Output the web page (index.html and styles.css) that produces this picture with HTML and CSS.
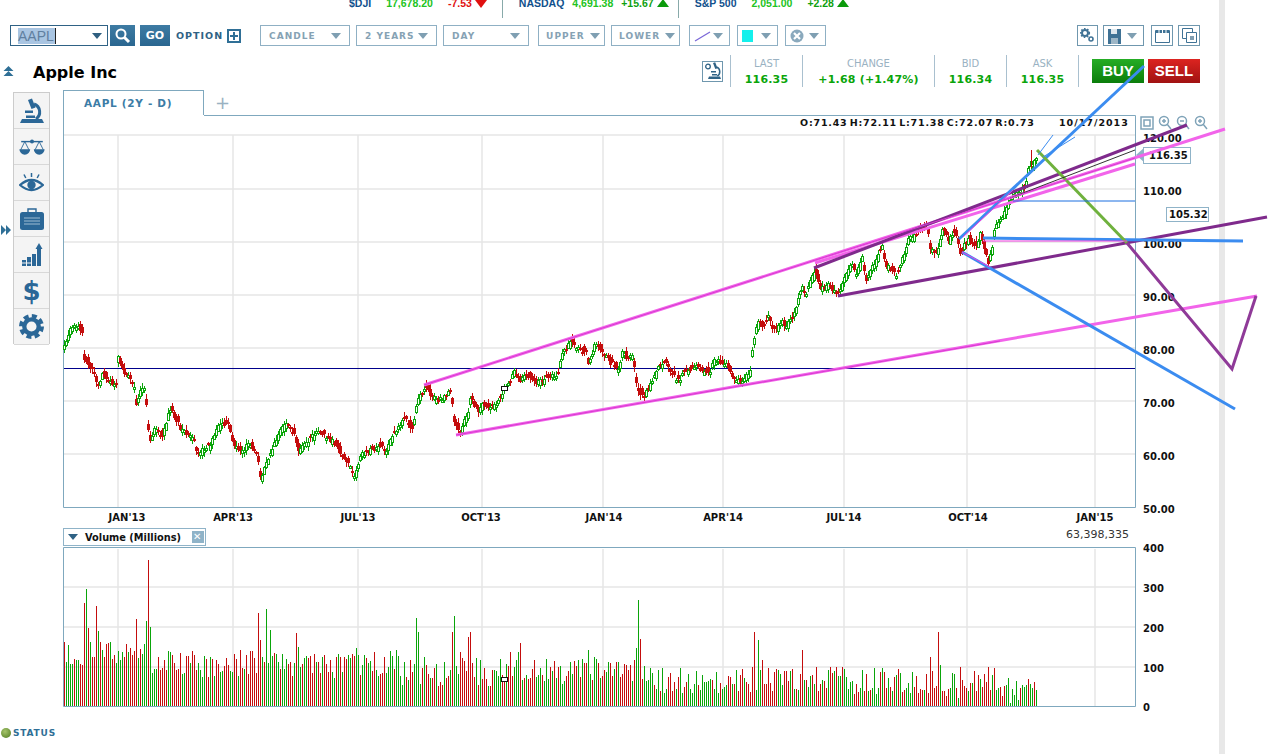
FILE: index.html
```html
<!DOCTYPE html>
<html lang="en">
<head>
  <meta charset="UTF-8" />
  <title>AAPL Chart</title>
  <link rel="stylesheet" href="styles.css">
</head>
<body>
<div class="page">

  <!-- TICKER -->
  <div class="ticker">
    <div class="tick">
      <span class="tick-name">$DJI</span>
      <span class="tick-val">17,678.20</span>
      <span class="tick-down">-7.53<i class="tri-down"></i></span>
    </div>
    <div class="tick mid">
      <span class="tick-name">NASDAQ</span>
      <span class="tick-val">4,691.38</span>
      <span class="tick-up">+15.67<i class="tri-up"></i></span>
    </div>
    <div class="tick last">
      <span class="tick-name">S&amp;P 500</span>
      <span class="tick-val">2,051.00</span>
      <span class="tick-up">+2.28<i class="tri-up"></i></span>
    </div>
  </div>

  <!-- TOOLBAR -->
  <div class="toolbar">
    <div class="symbol-input"><span class="symbol-text">AAPL</span><i class="caret dark"></i></div>
    <div class="blue-btn search-btn">
      <svg width="17" height="17" viewBox="0 0 17 17"><circle cx="7" cy="7" r="4.5" fill="none" stroke="#fff" stroke-width="2"/><path d="M10.5 10.5l4.5 4.5" stroke="#fff" stroke-width="3"/></svg>
    </div>
    <div class="blue-btn go-btn">GO</div>
    <div class="option">OPTION</div>
    <div class="plus-box"></div>

    <div class="tool-group first">
      <div class="select w-candle"><span>CANDLE</span><i class="caret"></i></div>
      <div class="select w-years"><span>2 YEARS</span><i class="caret"></i></div>
      <div class="select w-day"><span>DAY</span><i class="caret"></i></div>
    </div>
    <div class="tool-group">
      <div class="select w-upper"><span>UPPER</span><i class="caret"></i></div>
      <div class="select w-lower"><span>LOWER</span><i class="caret"></i></div>
    </div>
    <div class="tool-group narrow">
      <div class="select w-draw">
        <svg width="17" height="12" viewBox="0 0 17 12"><path d="M1 11L16 2" stroke="#7b68d8" stroke-width="1.3"/></svg>
        <i class="caret"></i>
      </div>
      <div class="select w-draw"><b class="swatch"></b><i class="caret"></i></div>
      <div class="select w-draw">
        <svg width="14" height="14" viewBox="0 0 14 14"><circle cx="7" cy="7" r="6.5" fill="#8aa9bd"/><path d="M4 4l6 6M10 4l-6 6" stroke="#fff" stroke-width="2.2"/></svg>
        <i class="caret"></i>
      </div>
    </div>

    <div class="tool-right">
      <div class="icon-btn w-gear">
        <svg width="15" height="15" viewBox="0 0 15 15"><circle cx="5" cy="5" r="3" fill="none" stroke="#3f7295" stroke-width="2"/><circle cx="5" cy="5" r="4.4" fill="none" stroke="#3f7295" stroke-width="1.4" stroke-dasharray="1.6 1.6"/><circle cx="11" cy="11" r="2" fill="none" stroke="#3f7295" stroke-width="1.6"/></svg>
      </div>
      <div class="icon-btn w-save">
        <svg width="13" height="16" viewBox="0 0 13 16"><path d="M0 1h13v15H0z" fill="#3f7295"/><path d="M3 1h6v5H3z" fill="#dfe8ee"/><path d="M3 10h7v6H3z" fill="#9db6c6"/></svg>
        <i class="caret"></i>
      </div>
      <div class="icon-btn w-cal">
        <svg width="15" height="15" viewBox="0 0 15 15"><path d="M.5 2.500h14v12H.5z" fill="#fff" stroke="#3f7295"/><path d="M1 2h13v3H1z" fill="#3f7295"/><path d="M4 2v3M7.500 2v3M11 2v3" stroke="#fff"/></svg>
      </div>
      <div class="icon-btn w-win">
        <svg width="15" height="15" viewBox="0 0 15 15"><path d="M.5.5h10v10H.5z" fill="#fff" stroke="#3f7295"/><path d="M4.500 4.500h10v10h-10z" fill="#fff" stroke="#3f7295"/><path d="M8 8h4v4H8z" fill="#7f9db1"/></svg>
      </div>
    </div>
  </div>

  <!-- TITLE AND QUOTE -->
  <div class="quote-row">
    <svg class="title-arrow" width="11" height="11" viewBox="0 0 11 11"><path d="M5.500 0l5 5H.5zM5.500 5l5 5H.5z" fill="#2f6f96"/></svg>
    <h1 class="title">Apple Inc</h1>
    <div class="study-btn">
      <svg width="17" height="18" viewBox="0 0 17 18"><circle cx="4" cy="4.500" r="2.300" fill="none" stroke="#2f6285" stroke-width="1.300"/><path d="M9 1l2.200-.8 2.300 6-2.200.8z" fill="#2f6285"/><path d="M12.500 5a5 5 0 0 1 .8 9" fill="none" stroke="#2f6285" stroke-width="1.500"/><path d="M7 9h5v1.500H7zM8 12h5v1.500H8zM5 14.500h11l1 2.500H4z" fill="#2f6285"/></svg>
    </div>
    <div class="quote-cell w-last"><label>LAST</label><strong>116.35</strong></div>
    <div class="quote-cell w-change"><label>CHANGE</label><strong>+1.68 (+1.47%)</strong></div>
    <div class="quote-cell w-bid"><label>BID</label><strong>116.34</strong></div>
    <div class="quote-cell w-ask"><label>ASK</label><strong>116.35</strong></div>
    <div class="trade-btns">
      <div class="trade buy">BUY</div>
      <div class="trade sell">SELL</div>
    </div>
  </div>

  <!-- SIDEBAR AND CHARTS -->
  <div class="main">
    <svg class="collapse" width="10" height="10" viewBox="0 0 10 10"><path d="M0 0l5 5-5 5zM5 0l5 5-5 5z" fill="#2f6f96"/></svg>

    <div class="side-tools">
      <div class="side-cell">
        <svg width="26" height="26" viewBox="0 0 26 26"><path d="M9 2l4-1.500 3.500 9-4 1.500z" fill="#2b6797"/><path d="M15 6a8.500 8.500 0 0 1 2 15" fill="none" stroke="#2b6797" stroke-width="3"/><path d="M6 12.500h8V15H6z" fill="#2b6797"/><path d="M3 21h20l2 4H1z" fill="#2b6797"/><path d="M7 17.500h9v2.500H7z" fill="#2b6797"/></svg>
      </div>
      <div class="side-cell">
        <svg width="26" height="18" viewBox="0 0 28 20"><path d="M2 4h24" stroke="#2b6797" stroke-width="1.600"/><circle cx="14" cy="4" r="2.200" fill="#2b6797"/><path d="M6 4L1.500 13M6 4l4.500 9M22 4l-4.500 9M22 4l4.500 9" stroke="#2b6797" fill="none"/><path d="M0 12.500h12a6 6 0 0 1-12 0zM16 12.500h12a6 6 0 0 1-12 0z" fill="#2b6797"/></svg>
      </div>
      <div class="side-cell">
        <svg width="25" height="21" viewBox="0 0 25 21"><path d="M1 13Q12.500 3 24 13 12.500 23 1 13z" fill="none" stroke="#2b6797" stroke-width="2.200"/><circle cx="12.500" cy="13" r="4.200" fill="#2b6797"/><path d="M12.500 1v4M5 2.500l1.800 3.500M20 2.500L18.200 6" stroke="#2b6797" stroke-width="1.500"/></svg>
      </div>
      <div class="side-cell">
        <svg width="26" height="24" viewBox="0 0 26 24"><path d="M9 5V2h8v3" fill="none" stroke="#2b6797" stroke-width="1.400"/><rect x="1" y="5" width="24" height="18" rx="2.500" fill="#2b6797"/><path d="M5 11h16M5 14h16M5 17h16" stroke="#9fbdd2"/></svg>
      </div>
      <div class="side-cell">
        <svg width="22" height="24" viewBox="0 0 22 24"><path d="M1 17h4v6H1zM6 14h4v9H6zM11 11h4v12h-4zM16 6h4v17h-4z" fill="#2b6797"/><path d="M18 0l3.500 6h-7z" fill="#2b6797"/><path d="M1 20h9" stroke="#f4f4f4"/></svg>
      </div>
      <div class="side-cell dollar">$</div>
      <div class="side-cell">
        <svg width="25" height="25" viewBox="0 0 26 26"><circle cx="13" cy="13" r="7.500" fill="none" stroke="#2b6797" stroke-width="4.500"/><circle cx="13" cy="13" r="11" fill="none" stroke="#2b6797" stroke-width="4" stroke-dasharray="5.200 3.440"/></svg>
      </div>
    </div>

    <div class="charts">
      <div class="tab-strip">
        <div class="tab">AAPL (2Y - D)</div>
        <div class="tab-add">+</div>
      </div>

      <svg id="price-chart" class="chart-svg" width="1156" height="413" viewBox="63 115 1156 413"></svg>

      <div class="vol-head">
        <div class="vol-title"><i class="vol-arrow"></i><span>Volume (Millions)</span><b class="vol-close"></b></div>
        <div class="vol-last">63,398,335</div>
      </div>

      <svg id="volume-chart" class="chart-svg" width="1156" height="175" viewBox="63 545 1156 175"></svg>

      <div class="status"><i class="status-dot"></i>STATUS</div>
    </div>
  </div>
</div>

<!-- DRAWN TREND LINES -->
<svg class="drawings" width="1275" height="754" viewBox="0 0 1275 754">
  <g class="thick">
    <path d="M424 385L1225 129" stroke="#f264ea"/>
    <path d="M815 263L1135 164" stroke="#f264ea"/>
    <path d="M456 435L1257 296" stroke="#f264ea"/>
    <path d="M814 268L1187 125" stroke="#7f2a8c"/>
    <path d="M838 296L1267 217" stroke="#7f2a8c"/>
    <path d="M959 239L1144 66" stroke="#3b8cf0"/>
    <path d="M983 238L1243 241" stroke="#3b8cf0"/>
    <path d="M962 252L1235 409" stroke="#3b8cf0"/>
    <path d="M1037 150L1127 243" stroke="#6fb13d"/>
    <path d="M1127 243L1232 369L1256 296" stroke="#8f3a98"/>
  </g>
  <g class="thin">
    <path d="M1010 198L1135 150" stroke="#333"/>
    <path d="M1013 201H1135" stroke="#1a6fe0"/>
    <path d="M1038 155L1053 135M1043 157L1075 137" stroke="#3b8cf0"/>
    <path d="M963 237L1013 190M983 241H1127M962 252L990 267" stroke="#f03ee0"/>
    <path d="M424 385L1135 158M456 435L1000 341" stroke="#d83ad0"/>
  </g>
</svg>

<script src="chart.js"></script>
</body>
</html>
```

FILE: styles.css
```css
body {
  margin: 0;
  overflow: hidden;
  height: 754px;
  background-color: #fff;
  font-family: "DejaVu Sans", sans-serif;
}

.page {
  width: 1219px;
  height: 754px;
  border-right: 6px solid #e8e8e8;
}

/* Ticker */
.ticker {
  display: flex;
  height: 18px;
  padding-left: 349px;
  overflow: hidden;
  font-family: "Liberation Sans", sans-serif;
  font-size: 10.5px;
  font-weight: bold;
  line-height: 12px;
}

.tick {
  display: flex;
  gap: 15px;
  padding-right: 15px;
  margin-right: 16px;
  border-right: 1px solid #8aa;
}

.tick.mid {
  gap: 8px;
  padding-right: 9px;
}

.tick.last {
  border-right: 0;
}

.tick span {
  margin-top: -3px;
}

.tick-name { color: #10508c; }
.tick-val { color: #22c322; }
.tick-up { color: #0f9f0f; }
.tick-down { color: #e01010; }

.tri-up, .tri-down {
  display: inline-block;
  margin-left: 3px;
  border-left: 6px solid transparent;
  border-right: 6px solid transparent;
}

.tri-up {
  border-bottom: 8px solid #0b9a0b;
  vertical-align: 0;
}

.tri-down {
  border-top: 8px solid #e01010;
  vertical-align: -1px;
}

/* Toolbar */
.toolbar {
  display: flex;
  align-items: center;
  width: 1190px;
  height: 21px;
  margin-top: 7px;
  padding-left: 10px;
}

.symbol-input {
  display: flex;
  align-items: center;
  justify-content: space-between;
  box-sizing: border-box;
  width: 98px;
  height: 21px;
  padding: 0 5px 0 7px;
  border: 1px solid #2f6285;
}

.symbol-text {
  padding-right: 1px;
  background-color: #a9c5e2;
  color: #5f7f9f;
  font-family: "Liberation Sans", sans-serif;
  font-size: 14px;
  line-height: 16px;
  border-right: 1px solid #222;
}

.caret {
  display: inline-block;
  border-left: 5px solid transparent;
  border-right: 5px solid transparent;
  border-top: 6px solid #7f9fb2;
}

.caret.dark {
  border-top-color: #2f5f80;
}

.blue-btn {
  display: flex;
  align-items: center;
  justify-content: center;
  height: 21px;
  background: linear-gradient(#3d7ba3, #2a6690);
  color: #fff;
}

.search-btn {
  width: 25px;
  margin-left: 2px;
}

.go-btn {
  width: 30px;
  margin-left: 5px;
  font-size: 11px;
  font-weight: bold;
}

.option {
  margin-left: 6px;
  color: #2f6285;
  font-size: 9.5px;
  font-weight: bold;
  letter-spacing: 1px;
}

.plus-box {
  width: 10px;
  height: 10px;
  margin-left: 4px;
  border: 2px solid #2f6f96;
  background:
    linear-gradient(#2f6f96, #2f6f96) center / 8px 2px no-repeat,
    linear-gradient(#2f6f96, #2f6f96) center / 2px 8px no-repeat;
}

.tool-group {
  display: flex;
  gap: 6px;
  margin-left: 9px;
}

.tool-group.first { margin-left: 19px; }
.tool-group.narrow { gap: 7px; }

.select, .icon-btn {
  display: flex;
  align-items: center;
  justify-content: space-between;
  box-sizing: border-box;
  height: 21px;
  padding: 0 8px;
  border: 1px solid #8fb0c4;
}

.select span {
  color: #86a2b4;
  font-size: 9px;
  font-weight: bold;
  letter-spacing: 1px;
}

.w-candle { width: 90px; }
.w-years { width: 81px; }
.w-day { width: 86px; }
.w-upper { width: 67px; padding: 0 4px 0 7px; }
.w-lower { width: 69px; padding: 0 4px 0 7px; }
.w-draw { width: 41px; padding: 0 6px 0 4px; }

.swatch {
  width: 11px;
  height: 12px;
  background-color: #14f0ec;
}

.tool-right {
  display: flex;
  gap: 5px;
  margin-left: auto;
}

.icon-btn { justify-content: center; padding: 0; border-color: #6f97ae; }
.w-gear { width: 21px; }
.w-save { width: 41px; justify-content: space-between; padding: 0 6px 0 4px; }
.w-cal { width: 22px; margin-left: 2px; }
.w-win { width: 22px; }

/* Title and quote */
.quote-row {
  display: flex;
  align-items: center;
  width: 1200px;
  height: 32px;
  margin-top: 9px;
}

.title-arrow {
  margin-left: 3px;
}

.title {
  margin: 2px 0 0 19px;
  color: #000;
  font-size: 16px;
  font-weight: bold;
}

.study-btn {
  display: flex;
  align-items: center;
  justify-content: center;
  box-sizing: border-box;
  width: 21px;
  height: 21px;
  margin-left: auto;
  margin-right: 7px;
  border: 1px solid #6f97ae;
}

.quote-cell {
  display: flex;
  flex-direction: column;
  align-items: center;
  box-sizing: border-box;
  height: 32px;
  border-left: 1px solid #a9c0cf;
}

.quote-cell label {
  margin-top: 3px;
  color: #9ab2c2;
  font-size: 10px;
  line-height: 12px;
}

.quote-cell strong {
  margin-top: 3px;
  color: #0aa50a;
  font-size: 11px;
  line-height: 13px;
  letter-spacing: .2px;
}

.w-last { width: 72px; }
.w-change { width: 132px; }
.w-bid { width: 72px; }
.w-ask { width: 73px; border-right: 1px solid #a9c0cf; }

.trade-btns {
  display: flex;
  gap: 4px;
  margin-left: 13px;
}

.trade {
  width: 52px;
  height: 24px;
  color: #fff;
  font-family: "Liberation Sans", sans-serif;
  font-size: 15px;
  font-weight: bold;
  line-height: 24px;
  text-align: center;
}

.buy { background: linear-gradient(#25ad25, #0b7d0b); }
.sell { background: linear-gradient(#dc2420, #a01212); }

/* Main */
.main {
  display: flex;
  margin-top: 3px;
}

.collapse {
  flex: none;
  margin: 135px 1px 0 1px;
}

.side-tools {
  flex: none;
  box-sizing: border-box;
  width: 37px;
  height: 252px;
  margin: 2px 13px 0 1px;
  background-color: #f4f4f4;
  border: 1px solid #ccc;
  border-bottom: 0;
}

.side-cell {
  display: flex;
  align-items: center;
  justify-content: center;
  box-sizing: border-box;
  height: 36px;
  border-bottom: 1px solid #d8d8d8;
}

.dollar {
  color: #2b6797;
  font-size: 26px;
  font-weight: bold;
}

.charts {
  width: 1156px;
}

.tab-strip {
  display: flex;
  height: 25px;
}

.tab {
  box-sizing: border-box;
  width: 141px;
  height: 25px;
  padding: 6px 0 0 20px;
  border: 1px solid #7fa8be;
  border-bottom: 0;
  color: #3c7ca6;
  font-size: 10.5px;
  font-weight: bold;
  letter-spacing: .7px;
}

.tab-add {
  margin: 1px 0 0 11px;
  color: #9ab2c2;
  font-size: 18px;
  line-height: 24px;
}

.chart-svg {
  display: block;
  overflow: visible;
}

.grid line { stroke: #e6e6e6; stroke-width: 1.5px; }
.frame { fill: none; stroke: #7fa8be; }

.axis-label {
  font-size: 10px;
  font-weight: bold;
  fill: #111;
}

.data-line {
  font-size: 9.5px;
  font-weight: bold;
  letter-spacing: .8px;
  word-spacing: -2px;
  fill: #111;
}

.date-line {
  font-size: 9.5px;
  font-weight: bold;
  letter-spacing: 1px;
  fill: #111;
}

.price-tag {
  font-size: 10px;
  font-weight: bold;
  fill: #111;
}

.tag-box { fill: #fff; stroke: #8fb3c8; }
.tag-arrow { fill: #8fb3c8; }
.zoom-icon { fill: none; stroke: #7fa3b8; stroke-width: 1.5px; }

.vol-head {
  display: flex;
  justify-content: space-between;
  box-sizing: border-box;
  height: 17px;
  padding-right: 90px;
}

.vol-title {
  display: flex;
  align-items: center;
  box-sizing: border-box;
  width: 143px;
  height: 18px;
  padding-left: 4px;
  border: 1px solid #8fb3c8;
  color: #111;
  font-size: 9.8px;
  font-weight: bold;
}

.vol-arrow {
  border-left: 5px solid transparent;
  border-right: 5px solid transparent;
  border-top: 6px solid #2f6285;
  margin-right: 7px;
}

.vol-close {
  position: relative;
  width: 12px;
  height: 12px;
  margin-left: auto;
  margin-right: 1px;
  background-color: #8fb3c8;
}

.vol-close::after {
  content: "\2715";
  position: absolute;
  left: 1px;
  top: 0;
  color: #fff;
  font-size: 10px;
  line-height: 12px;
}

.vol-last {
  color: #333;
  font-size: 11px;
  line-height: 14px;
}

.status {
  display: flex;
  align-items: center;
  height: 12px;
  margin: 7px 0 0 -62px;
  color: #2f6f96;
  font-size: 9px;
  font-weight: bold;
  letter-spacing: .8px;
}

.status-dot {
  width: 10px;
  height: 10px;
  margin-right: 2px;
  border-radius: 50%;
  background: radial-gradient(circle at 40% 35%, #a5c46a, #4f7a20);
}

/* Trend lines lie over the whole page */
.drawings {
  position: absolute;
  top: 0;
  left: 0;
  pointer-events: none;
}

.thin path { fill: none; stroke-width: 1; }
.thick path { fill: none; stroke-width: 3; }
```

FILE: chart.js
```js
// Price path read off the chart, as [x, y] in page pixels. Steep steps make the gaps.
const path = [
  [63,345],[70,330],[77,325],[82,335],[84,360],[88,363],[93,372],[98,385],[102,372],[110,383],[117,385],[118,355],
  [123,372],[130,378],[135,390],[136,403],[140,388],[145,385],[147,427],[150,441],[155,427],[162,437],[170,408],[180,428],
  [192,437],[197,453],[210,445],[218,427],[227,422],[233,443],[242,452],[248,443],[257,453],[260,478],[273,445],[285,422],
  [295,437],[297,453],[317,430],[337,445],[345,460],[355,477],[360,455],[380,445],[387,453],[389,440],[403,418],[412,427],
  [418,398],[425,387],[437,402],[450,392],[451,392],[453,417],[460,433],[463,420],[467,417],[470,398],[478,412],[483,403],
  [492,408],[500,397],[508,383],[515,370],[520,380],[527,375],[535,383],[552,375],[558,373],[562,353],[570,342],
  [586,353],[588,362],[592,355],[594,342],[605,353],[610,363],[618,370],[622,352],[628,360],[633,353],[635,383],[643,398],
  [653,378],[657,368],[665,358],[670,372],[678,380],[685,370],[697,367],[702,373],[710,370],[713,360],[727,363],[732,377],
  [742,382],[750,370],[751,373],[752,348],[757,323],[763,325],[768,317],[773,330],[782,322],[785,327],[795,310],[798,297],
  [802,288],[805,295],[814,270],[820,287],[828,285],[838,295],[845,275],[852,262],[855,275],[862,258],[866,280],[873,265],
  [882,245],[885,265],[897,275],[908,240],[917,232],[927,227],[930,250],[937,250],[943,227],[948,243],[953,230],[957,237],
  [960,253],[967,238],[977,247],[980,230],[988,263],[993,243],[994,230],[997,225],[1007,205],[1015,193],[1025,188],
  [1028,167],[1035,160],[1038,155]
];

// Tall volume bars, as [x, y, up]
const spikes = [
  [63,642,0],[83,603,0],[85,589,1],[87,628,0],[96,606,0],[98,631,1],[135,619,0],[145,621,1],[147,560,0],[148,587,0],[150,627,1],
  [257,613,0],[259,640,0],[266,609,1],[270,630,1],[295,633,0],[297,647,1],[355,648,1],[415,618,1],[417,632,1],[423,657,1],
  [452,632,0],[454,616,1],[460,652,0],[467,637,0],[469,632,0],[510,652,0],[519,643,0],[517,652,1],[587,650,1],[593,657,1],
  [570,662,1],[637,600,1],[640,639,0],[635,648,1],[753,632,0],[757,640,1],[761,660,0],[768,668,0],[801,650,0],[830,667,0],
  [873,668,1],[929,657,0],[931,671,0],[937,632,0],[939,665,1],[960,667,0],[987,667,0],[994,668,0]
];

const SVG_NS = 'http://www.w3.org/2000/svg';
const GRID_X = [118, 233, 358, 482, 603, 723, 844, 967, 1095];
const DATES = [[127,"JAN'13"],[233,"APR'13"],[358,"JUL'13"],[481,"OCT'13"],[604,"JAN'14"],[723,"APR'14"],[844,"JUL'14"],[968,"OCT'14"],[1095,"JAN'15"]];
const LAST_X = 1037;
const GREEN = '#0aa50a';
const RED = '#c40d0d';

// Small seeded generator so each run draws the same candles
let seed = 20141121;
function rand() {
  seed = (seed * 1664525 + 1013904223) % 4294967296;
  return seed / 4294967296;
}

function el(parent, name, attrs, text) {
  const node = document.createElementNS(SVG_NS, name);
  for (const key in attrs) node.setAttribute(key, attrs[key]);
  if (text) node.textContent = text;
  parent.appendChild(node);
  return node;
}

function priceAt(x) {
  for (let i = 1; i < path.length; i++) {
    if (x <= path[i][0]) {
      const a = path[i - 1], b = path[i];
      return a[1] + (b[1] - a[1]) * (x - a[0]) / ((b[0] - a[0]) || 1);
    }
  }
  return path[path.length - 1][1];
}

function drawGrid(svg, top, bottom, rows) {
  const grid = el(svg, 'g', { class: 'grid' });
  GRID_X.forEach(x => el(grid, 'line', { x1: x, x2: x, y1: top, y2: bottom }));
  rows.forEach(y => el(grid, 'line', { x1: 64, x2: 1135, y1: y, y2: y }));
}

// Price chart
const priceSvg = document.getElementById('price-chart');
drawGrid(priceSvg, 135, 507, [135, 189, 242, 295, 348, 401, 454]);
el(priceSvg, 'path', { class: 'frame', d: 'M204 115.5H1135.5V507.5H63.5V115' });
el(priceSvg, 'line', { x1: 64, x2: 1135, y1: 368.5, y2: 368.5, stroke: '#00008b' });

const ups = {};
const candles = el(priceSvg, 'g', { 'shape-rendering': 'crispEdges' });
for (let x = 64; x <= LAST_X; x += 2) {
  const close = priceAt(x) + (rand() - .5) * 5;
  // a body never spans a price gap
  let open = priceAt(x - 2) + (rand() - .5) * 9;
  if (Math.abs(open - close) > 8) open = close + (open > close ? 6 : -6);
  const up = close < open;
  ups[x] = up;
  const top = Math.round(Math.min(open, close));
  const height = Math.max(2, Math.round(Math.abs(open - close)));
  const color = up ? GREEN : RED;
  el(candles, 'line', { x1: x + .5, x2: x + .5, y1: top - 1 - Math.round(rand() * 4), y2: top + height + 1 + Math.round(rand() * 4), stroke: color });
  if (up) {
    el(candles, 'rect', { x: x - .5, y: top + .5, width: 2, height: height, fill: '#fff', stroke: color });
  } else {
    el(candles, 'rect', { x: x - 1, y: top, width: 3, height: height, fill: color });
  }
}

// High wick near the last bars and the crosshair marker
el(candles, 'line', { x1: 1031.5, x2: 1031.5, y1: 150, y2: 168, stroke: RED });
el(priceSvg, 'rect', { x: 501.5, y: 386.5, width: 6, height: 4, fill: '#fff', stroke: '#111' });

['120.00', '110.00', '100.00', '90.00', '80.00', '70.00', '60.00', '50.00'].forEach((label, i) => {
  el(priceSvg, 'text', { class: 'axis-label', x: 1143, y: 142 + i * 53 }, label);
});
DATES.forEach(d => el(priceSvg, 'text', { class: 'axis-label', x: d[0], y: 521, 'text-anchor': 'middle' }, d[1]));
el(priceSvg, 'text', { class: 'data-line', x: 800, y: 126 }, 'O:71.43 H:72.11 L:71.38 C:72.07 R:0.73');
el(priceSvg, 'text', { class: 'date-line', x: 1059, y: 126 }, '10/17/2013');

// Last price and marked price tags
el(priceSvg, 'path', { class: 'tag-arrow', d: 'M1136 155L1145 147V163z' });
el(priceSvg, 'rect', { class: 'tag-box', x: 1143.5, y: 147.5, width: 47, height: 16 });
el(priceSvg, 'text', { class: 'price-tag', x: 1149, y: 159 }, '116.35');
el(priceSvg, 'rect', { class: 'tag-box', x: 1166.5, y: 207.5, width: 42, height: 14 });
el(priceSvg, 'text', { class: 'price-tag', x: 1169, y: 218 }, '105.32');

// Chart zoom icons
el(priceSvg, 'rect', { class: 'zoom-icon', x: 1141, y: 117, width: 12, height: 12 });
el(priceSvg, 'rect', { class: 'zoom-icon', x: 1144, y: 120, width: 6, height: 6 });
[[1164, '+'], [1182, '-'], [1200, '+']].forEach(z => {
  el(priceSvg, 'circle', { class: 'zoom-icon', cx: z[0], cy: 121, r: 4.5 });
  el(priceSvg, 'path', { class: 'zoom-icon', d: `M${z[0] + 3} 124l4 5M${z[0] - 2} 121h4` + (z[1] === '+' ? `M${z[0]} 119v4` : '') });
});

// Volume chart
const volSvg = document.getElementById('volume-chart');
drawGrid(volSvg, 549, 706, [587, 627, 667]);
el(volSvg, 'path', { class: 'frame', d: 'M63.5 547.5H1135.5V706.5H63.5z' });

function baseVolume(x) {
  if (x < 150) return 652;
  if (x < 400) return 664;
  if (x < 640) return 672;
  if (x < 900) return 680;
  if (x < 1000) return 684;
  return 691;
}

const bars = el(volSvg, 'g', { 'shape-rendering': 'crispEdges' });
for (let x = 64; x <= LAST_X; x += 2) {
  const y = Math.min(703, baseVolume(x) + Math.round((rand() - .5) * 28));
  // volume colours follow the candle most of the time
  const up = rand() < .3 ? !ups[x] : ups[x];
  el(bars, 'rect', { x: x, y: y, width: 1, height: 706 - y, fill: up ? GREEN : RED });
}
spikes.forEach(s => {
  const x = s[0] % 2 ? s[0] + 1 : s[0];
  el(bars, 'rect', { x: x, y: s[1], width: 1, height: 706 - s[1], fill: s[2] ? GREEN : RED });
});
el(volSvg, 'rect', { x: 501.5, y: 677.5, width: 6, height: 4, fill: '#fff', stroke: '#111' });

[[400, 552], [300, 592], [200, 632], [100, 672], [0, 711]].forEach(t => {
  el(volSvg, 'text', { class: 'axis-label', x: 1143, y: t[1] }, String(t[0]));
});
```
